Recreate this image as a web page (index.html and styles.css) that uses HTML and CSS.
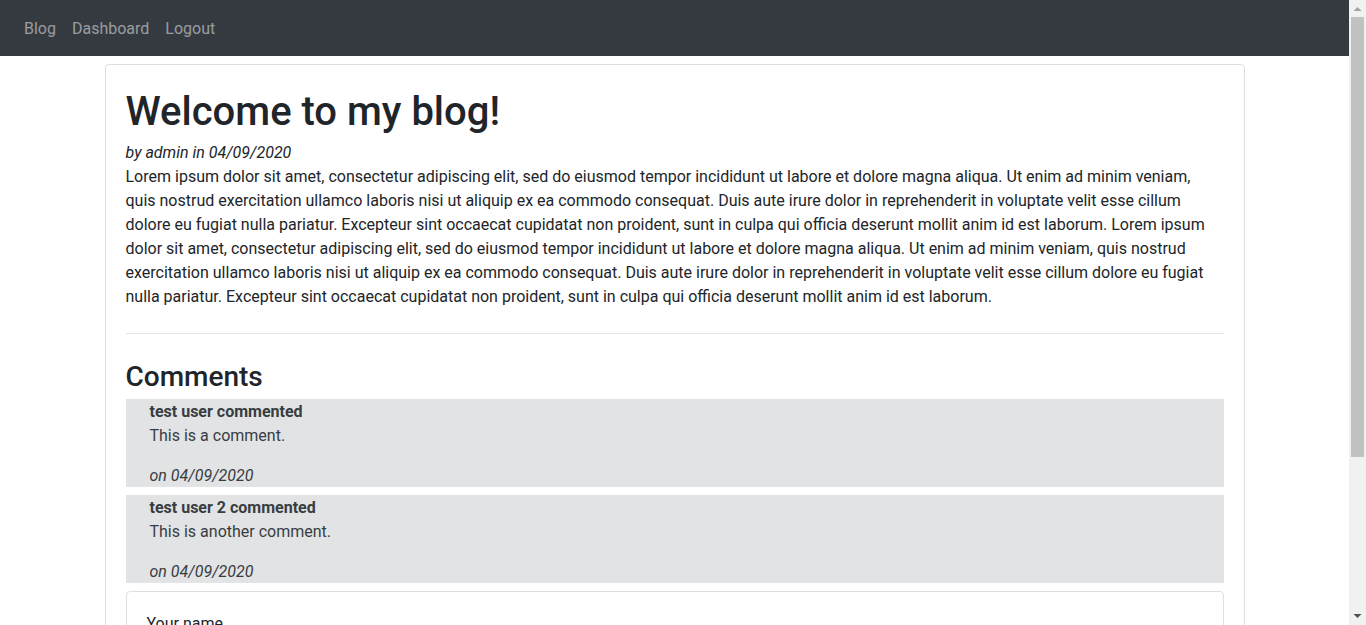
FILE: index.html
```html
<!DOCTYPE html>
<html lang="en">
<head>
<meta charset="utf-8">
<title>Welcome to my blog!</title>
<link rel="stylesheet" href="styles.css">
</head>
<body>
<nav class="navbar">
  <a class="nav-link" href="#">Blog</a>
  <a class="nav-link" href="#">Dashboard</a>
  <a class="nav-link" href="#">Logout</a>
</nav>
<main class="container">
  <article class="card">
    <h1 class="post-title">Welcome to my blog!</h1>
    <div class="meta">by admin in 04/09/2020</div>
    <p class="post-body">Lorem ipsum dolor sit amet, consectetur adipiscing elit, sed do eiusmod tempor incididunt ut labore et dolore magna aliqua. Ut enim ad minim veniam, quis nostrud exercitation ullamco laboris nisi ut aliquip ex ea commodo consequat. Duis aute irure dolor in reprehenderit in voluptate velit esse cillum dolore eu fugiat nulla pariatur. Excepteur sint occaecat cupidatat non proident, sunt in culpa qui officia deserunt mollit anim id est laborum. Lorem ipsum dolor sit amet, consectetur adipiscing elit, sed do eiusmod tempor incididunt ut labore et dolore magna aliqua. Ut enim ad minim veniam, quis nostrud exercitation ullamco laboris nisi ut aliquip ex ea commodo consequat. Duis aute irure dolor in reprehenderit in voluptate velit esse cillum dolore eu fugiat nulla pariatur. Excepteur sint occaecat cupidatat non proident, sunt in culpa qui officia deserunt mollit anim id est laborum.</p>
    <hr class="divider">
    <h3 class="comments-title">Comments</h3>
    <div class="comment">
      <strong class="comment-author">test user commented</strong>
      <p class="comment-text">This is a comment.</p>
      <em class="comment-date">on 04/09/2020</em>
    </div>
    <div class="comment">
      <strong class="comment-author">test user 2 commented</strong>
      <p class="comment-text">This is another comment.</p>
      <em class="comment-date">on 04/09/2020</em>
    </div>
    <form class="form-card">
      <label class="form-label" for="name">Your name</label>
      <input class="form-input" id="name" type="text">
      <label class="form-label" for="comment">Comment</label>
      <input class="form-input form-input-last" id="comment" type="text">
      <button class="btn" type="button">Submit</button>
    </form>
  </article>
</main>
<div class="scrollbar" aria-hidden="true">
  <svg class="sb-arrow" width="17" height="17" viewBox="0 0 17 17"><path d="M4.5 11 L8.5 7 L12.5 11 Z" fill="#a3a3a3"/></svg>
  <div class="sb-track"><div class="sb-thumb"></div></div>
  <svg class="sb-arrow" width="17" height="17" viewBox="0 0 17 17"><path d="M4.5 6 L8.5 10 L12.5 6 Z" fill="#505050"/></svg>
</div>
</body>
</html>
```
FILE: styles.css
```css
* { box-sizing: border-box; }
html, body { margin: 0; }
body {
  margin-right: 17px;
  font-family: Roboto, "Liberation Sans", sans-serif;
  font-size: 16px;
  line-height: 24px;
  color: #212529;
  background: #fff;
}
.navbar {
  display: flex;
  align-items: center;
  height: 56px;
  padding: 1px 16px 0;
  background: #343a40;
}
.nav-link {
  padding: 0 8px;
  color: rgba(255, 255, 255, 0.5);
  text-decoration: none;
}
.container {
  max-width: 1140px;
  margin: 8px auto 20px;
}
.card {
  border: 1px solid rgba(0, 0, 0, 0.125);
  border-radius: 4px;
  padding: 20px;
}
.post-title {
  margin: 0 0 5px;
  padding-top: 3px;
  font-size: 40px;
  line-height: 48px;
  font-weight: 500;
}
.meta { font-style: italic; }
.post-body { margin: 0 0 24px; }
.divider {
  margin: 0 0 24px;
  border: 0;
  border-top: 1px solid rgba(0, 0, 0, 0.1);
}
.comments-title {
  margin: 0 0 6px;
  padding-top: 2px;
  font-size: 28px;
  line-height: 33px;
  font-weight: 500;
}
.comment {
  display: flex;
  flex-direction: column;
  margin-bottom: 8px;
  padding: 1px 24px 0;
  height: 88px;
  background: #e2e3e5;
  color: #383d41;
}
.comment-author { font-weight: 700; }
.comment-text { margin: 0 0 16px; }
.comment-date { font-style: italic; }
.form-card {
  display: flex;
  flex-direction: column;
  border: 1px solid rgba(0, 0, 0, 0.125);
  border-radius: 4px;
  padding: 20px;
}
.form-label { margin-bottom: 8px; }
.form-input {
  height: 38px;
  margin-bottom: 16px;
  padding: 6px 12px;
  border: 1px solid #ced4da;
  border-radius: 4px;
  font: inherit;
  color: #495057;
}
.form-input-last { margin-bottom: 8px; }
.btn {
  align-self: flex-start;
  padding: 4px 8px;
  border: 1px solid #007bff;
  border-radius: 3px;
  background: #007bff;
  color: #fff;
  font: inherit;
  font-size: 14px;
  line-height: 21px;
}
.scrollbar {
  position: fixed;
  top: 0;
  right: 0;
  bottom: 0;
  width: 17px;
  display: flex;
  flex-direction: column;
  background: #f1f1f1;
}
.sb-arrow { display: block; flex: none; }
.sb-track { flex: 1; padding: 0 2px; }
.sb-thumb {
  height: 440px;
  background: #c1c1c1;
}
```
